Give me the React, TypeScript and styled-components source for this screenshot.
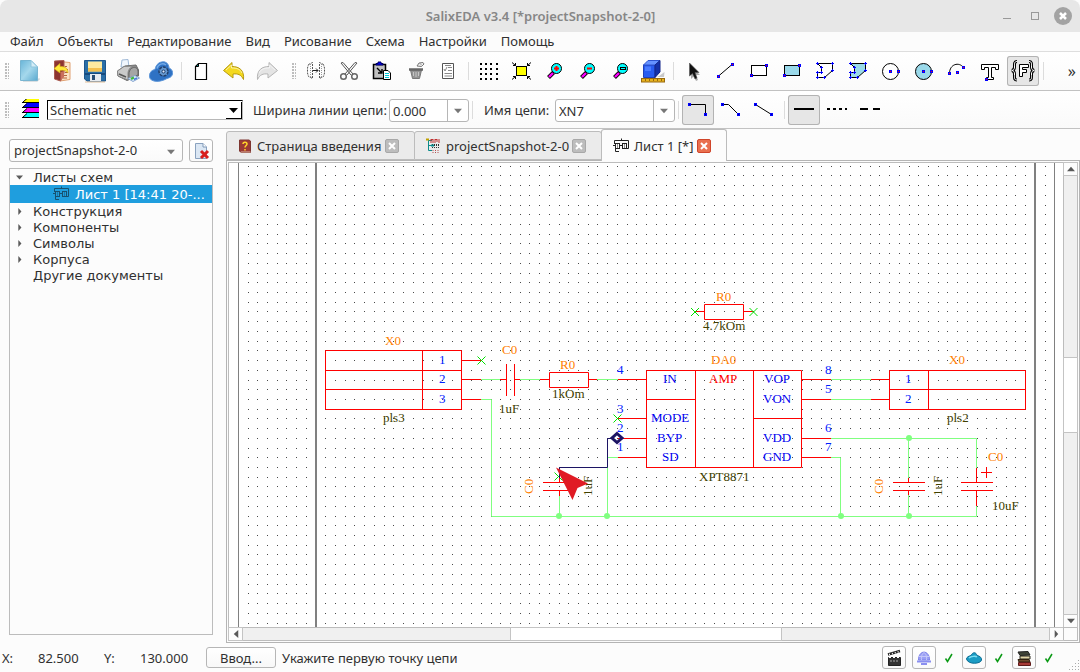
import React from "react";
import styled, { createGlobalStyle } from "styled-components";

const Global = createGlobalStyle`
  * { box-sizing: border-box; }
  body { margin: 0; background: #fcfcfc; }
  body, button, input, select {
    font-family: "Noto Sans", sans-serif;
    font-size: 13px;
    color: #303030;
  }
  button, input, select { padding: 0; border: 0; background: none; outline: none; }
  svg { display: block; flex: none; }
`;

/* ---------- frame ---------- */

const Window = styled.div`
  display: flex;
  flex-direction: column;
  height: 100vh;
  overflow: hidden;
`;

const TitleBar = styled.header`
  display: flex;
  align-items: center;
  justify-content: flex-end;
  height: 32px;
  padding-right: 3px;
  background: #e7e7e7;
  border-radius: 8px 8px 0 0;
  flex: none;
`;

const Title = styled.h1`
  flex: 1;
  margin: 0;
  padding-left: 88px;
  text-align: center;
  font-size: 13px;
  font-weight: 600;
  color: #868686;
`;

const WindowButton = styled.button`
  width: 28px;
  height: 24px;
  display: grid;
  place-items: center;
`;

const MenuBar = styled.nav`
  display: flex;
  align-items: center;
  height: 20px;
  padding-left: 3px;
  border-bottom: 1px solid #dedede;
  flex: none;
`;

const MenuItem = styled.button`
  padding: 0 7px;
  line-height: 19px;
  white-space: nowrap;
`;

const Bar = styled.div<{ $h: number }>`
  display: flex;
  height: ${(p) => p.$h}px;
  padding: 4px 0 0 5px;
  border-bottom: 1px solid #c2c2c2;
  background: linear-gradient(#fff, #fafafa);
  overflow: hidden;
  flex: none;
`;

const Grip = styled.div<{ $left?: number }>`
  width: 4px;
  height: 16px;
  margin: 7px 4px 0 ${(p) => p.$left ?? 0}px;
  background: radial-gradient(circle at 1px 1px, #bdbdbd 1px, transparent 1px) 0 0 / 3px 3px;
  flex: none;
`;

const Separator = styled.div`
  width: 1px;
  height: 18px;
  margin: 6px 3px 0;
  background: #dcdcdc;
  flex: none;
`;

const ToolButton = styled.button<{ $on?: boolean }>`
  width: 32px;
  height: 30px;
  margin-right: 1px;
  display: grid;
  place-items: center;
  border-radius: 3px;
  background: ${(p) => (p.$on ? "#e6e6e6" : "transparent")};
  box-shadow: ${(p) => (p.$on ? "inset 0 0 0 1px #b3b3b3" : "none")};
  flex: none;
`;

const Overflow = styled.button`
  margin: 0 4px 4px auto;
  font-size: 16px;
  line-height: 26px;
`;

const FieldLabel = styled.label<{ $w: number; $pad?: number }>`
  width: ${(p) => p.$w}px;
  padding-left: ${(p) => p.$pad ?? 0}px;
  line-height: 30px;
  white-space: nowrap;
  flex: none;
`;

const LayerMark = styled.div`
  padding: 4px 0 0 9px;
  flex: none;
`;

const LayerCombo = styled.div`
  position: relative;
  width: 196px;
  height: 20px;
  margin: 5px 10px 0 7px;
  border: 1px solid #b8b8b8;
  border-top-color: #000;
  border-left-color: #000;
  background: #fff;
  flex: none;
  select {
    width: 100%;
    height: 18px;
    padding-left: 2px;
    appearance: none;
  }
`;

const LayerArrow = styled.span`
  position: absolute;
  right: 0;
  top: 1px;
  width: 16px;
  height: 17px;
  display: grid;
  place-items: center;
  border-right: 1px solid #000;
  border-bottom: 1px solid #000;
  background: #fff;
  pointer-events: none;
`;

const ComboBox = styled.div<{ $w: number }>`
  display: flex;
  width: ${(p) => p.$w}px;
  height: 23px;
  margin-top: 4px;
  border: 1px solid #b6b6b6;
  border-radius: 3px;
  background: #fff;
  flex: none;
  input { flex: 1; min-width: 0; padding-left: 3px; }
  button { width: 21px; display: grid; place-items: center; border-left: 1px solid #b6b6b6; }
`;

/* ---------- work area ---------- */

const Work = styled.div`
  display: flex;
  flex: 1;
  min-height: 0;
`;

const Side = styled.aside`
  display: flex;
  flex-direction: column;
  width: 204px;
  margin: 10px 13px 8px 9px;
  flex: none;
`;

const ProjectRow = styled.div`
  display: flex;
  gap: 6px;
  margin-bottom: 6px;
`;

const ProjectSelect = styled.div`
  position: relative;
  flex: 1;
  height: 23px;
  border: 1px solid #b6b6b6;
  border-radius: 3px;
  background: linear-gradient(#fff, #fafafa);
  select { display: block; width: 100%; height: 20px; padding-left: 4px; appearance: none; }
  svg { position: absolute; right: 7px; top: 8px; pointer-events: none; }
`;

const SmallButton = styled.button<{ $gap?: number }>`
  width: 24px;
  height: 23px;
  margin-right: ${(p) => p.$gap ?? 0}px;
  display: grid;
  place-items: center;
  border: 1px solid #b6b6b6;
  border-radius: 3px;
  background: linear-gradient(#fff, #fafafa);
  flex: none;
`;

const Tree = styled.ul`
  flex: 1;
  margin: 0;
  padding: 0;
  border: 1px solid #bcbcbc;
  list-style: none;
  font-family: "DejaVu Sans", sans-serif;
  line-height: 15px;
`;

const TreeRow = styled.li<{ $selected?: boolean }>`
  display: flex;
  align-items: center;
  gap: ${(p) => (p.$selected ? 6 : 9)}px;
  height: ${(p) => (p.$selected ? 18 : 16)}px;
  padding-left: ${(p) => (p.$selected ? 43 : 5)}px;
  background: ${(p) => (p.$selected ? "#1f9ede" : "transparent")};
  color: ${(p) => (p.$selected ? "#fff" : "#303030")};
  white-space: nowrap;
`;

const Toggle = styled.span`
  width: 9px;
  display: grid;
  place-items: center;
`;

const Docs = styled.main`
  display: flex;
  flex-direction: column;
  flex: 1;
  min-width: 0;
`;

const Tabs = styled.div`
  display: flex;
  align-items: flex-end;
  height: 31px;
  flex: none;
`;

const Tab = styled.div<{ $active?: boolean; $w: number }>`
  display: flex;
  align-items: center;
  width: ${(p) => p.$w}px;
  height: ${(p) => (p.$active ? 32 : 29)}px;
  padding: 0 15px 0 11px;
  margin-bottom: ${(p) => (p.$active ? -1 : 0)}px;
  margin-right: ${(p) => (p.$active ? 0 : -1)}px;
  border: 1px solid #bcbcbc;
  border-bottom: ${(p) => (p.$active ? "0" : "1px solid #bcbcbc")};
  border-radius: 3px 3px 0 0;
  background: ${(p) => (p.$active ? "#fcfcfc" : "#ebebeb")};
  position: relative;
  z-index: ${(p) => (p.$active ? 1 : 0)};
  flex: none;
`;

const TabName = styled.button`
  flex: 1;
  margin-left: 5px;
  text-align: left;
  white-space: nowrap;
`;

const TabClose = styled.button<{ $hot?: boolean }>`
  width: 14px;
  height: 14px;
  display: grid;
  place-items: center;
  border: 1px solid ${(p) => (p.$hot ? "#d0452a" : "#a8a8a8")};
  border-radius: 2px;
  background: ${(p) => (p.$hot ? "#e9704f" : "#bdbdbd")};
  flex: none;
`;

const Pane = styled.div`
  display: flex;
  flex: 1;
  min-height: 0;
  padding: 1px;
  border: 1px solid #b4b4b4;
`;

const Viewport = styled.div`
  display: grid;
  grid-template: 1fr 13px / 1fr 14px;
  flex: 1;
  min-width: 0;
  border: 1px solid #bcbcbc;
`;

const Sheet = styled.div`
  min-width: 0;
  min-height: 0;
  overflow: hidden;
  background: #fff;
`;

const ScrollBar = styled.div<{ $vertical?: boolean }>`
  display: flex;
  flex-direction: ${(p) => (p.$vertical ? "column" : "row")};
  background: #f0f0f0;
  border-${(p) => (p.$vertical ? "left" : "top")}: 1px solid #bcbcbc;
`;

const ScrollArrow = styled.button`
  width: 13px;
  height: 12px;
  display: grid;
  place-items: center;
  background: #fdfdfd;
  box-shadow: 0 0 0 1px #c4c4c4;
  flex: none;
`;

const Track = styled.div<{ $grow: number; $thumb?: boolean }>`
  flex: ${(p) => p.$grow};
  background: ${(p) => (p.$thumb ? "#fff" : "transparent")};
  box-shadow: ${(p) => (p.$thumb ? "0 0 0 1px #c4c4c4" : "none")};
`;

const ScrollCorner = styled.div`
  border: solid #bcbcbc;
  border-width: 1px 0 0 1px;
`;

/* ---------- status bar ---------- */

const StatusBar = styled.footer`
  display: flex;
  align-items: center;
  height: 29px;
  padding-left: 2px;
  flex: none;
`;

const Coord = styled.span<{ $w: number }>`
  width: ${(p) => p.$w}px;
  flex: none;
`;

const EntryButton = styled.button`
  width: 70px;
  height: 21px;
  margin-right: 6px;
  border: 1px solid #b6b6b6;
  border-radius: 3px;
  background: linear-gradient(#fff, #f8f8f8);
`;

const StatusTools = styled.div`
  display: flex;
  align-items: center;
  margin-left: auto;
`;

const Check = styled.span`
  width: 26px;
  display: grid;
  place-items: center;
`;

const SizeGrip = styled.div`
  align-self: flex-end;
  width: 18px;
  padding: 0 0 1px 6px;
`;

/* ---------- icons ---------- */

const Icon = ({ children, size = 24 }: { children: React.ReactNode; size?: number }) => (
  <svg width={size} height={size} viewBox={`0 0 ${size} ${size}`} fill="none" stroke="#000" strokeWidth="1" aria-hidden="true">
    {children}
  </svg>
);

const Arrow = ({ dir = "down", w = 9, color = "#5a5a5a" }: { dir?: string; w?: number; color?: string }) => {
  const paths: Record<string, string> = {
    down: "M0 2H9L4.5 7Z",
    up: "M0 7H9L4.5 2Z",
    left: "M7 0V9L2 4.5Z",
    right: "M3 0V9L7 4.5Z",
  };
  return (
    <svg width={w} height={w} viewBox="0 0 9 9" aria-hidden="true">
      <path d={paths[dir]} fill={color} />
    </svg>
  );
};

const Pt = ({ x, y, red = true }: { x: number; y: number; red?: boolean }) => (
  <g stroke="none">
    <rect x={x - 1.5} y={y - 1.5} width="3" height="3" fill="#00f" />
    <rect x={x - 0.5} y={y - 0.5} width="1" height="1" fill={red ? "#f00" : "#000090"} />
  </g>
);

const NewIcon = () => (
  <Icon>
    <defs>
      <linearGradient id="sheetBlue" x1="0" y1="0" x2="1" y2="1">
        <stop offset="0" stopColor="#69b5d8" />
        <stop offset="0.5" stopColor="#a5d8ec" />
        <stop offset="1" stopColor="#5aa9cf" />
      </linearGradient>
    </defs>
    <path d="M6 22H20L22.500 19.500" stroke="#d0d6da" strokeWidth="1.500" />
    <path d="M3.500 1.500H14L20.500 8V21.500H3.500Z" fill="url(#sheetBlue)" stroke="#78b5d1" />
    <path d="M14 1.500V8H20.500Z" fill="#d4edf7" stroke="#8fc5dd" />
  </Icon>
);

const OpenIcon = () => (
  <Icon>
    <path d="M9 2.500L20 3.500V20.500L10 22Z" fill="#fbe3c3" stroke="#e0a070" />
    <path d="M15 7.500H17M14 10.500H18M15 13.500H18M13 16.500H17M13 19H17" stroke="#b5643c" />
    <path d="M4.500 2L14 1.500V14L10.500 22L4.500 20Z" fill="#8c3430" stroke="#a85a50" />
    <path d="M10.500 13V22L14 18V12Z" fill="#c9705c" stroke="none" />
    <path d="M4 9.500L10 4.500V7.500C15 7.500 18 9 18 14C16 11.500 14 11 10 11.500V14Z" fill="#ffe93a" stroke="#d4ab18" strokeWidth="0.7" />
  </Icon>
);

const SaveIcon = () => (
  <Icon>
    <path d="M1.500 1.500H22.500V22H4L1.500 20Z" fill="#2a6ea6" stroke="#1c568c" />
    <path d="M5 2.500H19V12.500H5Z" fill="#fdeaa0" stroke="none" />
    <path d="M5 9H19V12.500H5Z" fill="#f3c04f" stroke="none" />
    <path d="M2 14H22V16H2Z" fill="#174a7d" stroke="none" />
    <path d="M7 15H18V22H7Z" fill="#e6ebf0" stroke="none" />
    <path d="M9 16H12V21H9Z" fill="#274c72" stroke="none" />
    <path d="M2 23H22" stroke="#d9a874" strokeOpacity="0.7" />
  </Icon>
);

const PrintIcon = () => (
  <Icon>
    <path d="M5 8L6 1L12 0.500L13 8Z" fill="#f0f6fd" stroke="#9fb9d6" />
    <path d="M1.500 12L9 7L20 6L22.500 11V17L11 21.500L2 17Z" fill="#8b8b8b" stroke="#6a6a6a" />
    <path d="M1.500 12L8 7.500L17 7C13 9 12 12 12 15V21L2 17Z" fill="#cacaca" stroke="#858585" />
    <path d="M13 15C13 8 21 6 22 12V16L13 19Z" fill="#a5a5a5" stroke="#666" />
    <path d="M3 15L10 18" stroke="#555" strokeWidth="1.500" />
    <path d="M12 19.500L19 16.500L23.500 19L17 22.500Z" fill="#dceefb" stroke="#86a5ce" />
    <path d="M15 20L18 18.500" stroke="#42b83a" strokeWidth="2.500" />
    <path d="M18 20.500L21 19" stroke="#4d78dc" strokeWidth="1.500" />
  </Icon>
);

const CloudIcon = () => (
  <Icon>
    <path d="M0.500 17C0.500 13 3 11 6 10.500C7 5 11 2 16 3C19 4 20 7 20 9C23 10 24 13 23.500 15C23 18 20 19 18 19.500C14 22 8 23 5 22C2 21 0.500 20 0.500 17Z" fill="#2f72c4" stroke="#5d96d9" />
    <path d="M8 9.500C9 5 14 3.500 17 6" stroke="#71aae8" strokeWidth="1.500" />
    <circle cx="14.500" cy="12.500" r="4.500" stroke="#233f68" strokeWidth="1.500" strokeDasharray="3 1" fill="#6599d2" />
    <circle cx="14.500" cy="12.500" r="1.500" fill="#dbeaff" stroke="#203d68" />
  </Icon>
);

const PageIcon = () => (
  <Icon>
    <path d="M9.500 4.500H17.500V20.500H6.500V7.500Z" fill="#fff" strokeWidth="1.200" />
    <path d="M9.500 4.500V7.500H6.500Z" fill="#008080" />
  </Icon>
);

const BackArrow = ({ fill, edge, flip }: { fill: string; edge: string; flip?: boolean }) => (
  <Icon>
    <g transform={flip ? "translate(24 0) scale(-1 1)" : undefined}>
      <path d="M1.500 11.500L10 3.500V7.500C17 7.500 22.500 11 21.500 20.500C19 15.500 16 14.500 11 15V19Z" fill={fill} stroke={edge} />
      <path d="M4 11L9.500 6V9C15 9 18 10 20 14" stroke="#ffffff" strokeOpacity="0.6" />
    </g>
  </Icon>
);

const MirrorIcon = () => (
  <Icon>
    <path d="M4.500 5.500L8.500 3.500V19.500L4.500 17.500L3.500 14V9ZM19.500 5.500L15.500 3.500V19.500L19.500 17.500L20.500 14V9Z" stroke="#555" strokeDasharray="2 1" />
    <path d="M6.500 5V18M17.500 5V18" stroke="#999" strokeDasharray="1 1" />
    <path d="M9 11.500H14M12 9.500L14 11.500L12 13.500" stroke="#222" />
  </Icon>
);

const CutIcon = () => (
  <Icon>
    <path d="M4 4L6 3.500L16 15M20 4L18 3.500L8 15M4 4L14 16M20 4L10 16" stroke="#555" />
    <circle cx="6.500" cy="17.500" r="2.800" stroke="#666" strokeWidth="1.500" />
    <circle cx="17.500" cy="17.500" r="2.800" stroke="#666" strokeWidth="1.500" />
  </Icon>
);

const PasteIcon = () => (
  <Icon>
    <path d="M3.500 5.500H15.500V19.500H3.500Z" fill="#c0c0c0" strokeWidth="1.500" />
    <path d="M6 6V4.500H8V3H11V4.500H13V6Z" fill="#00f" stroke="#000060" />
    <path d="M7 9L12 14M12 10V14H8" strokeWidth="1.400" />
    <path d="M13.500 11.500H18L20.500 14V20.500H13.500Z" fill="#fff" />
    <path d="M15 14.500H19M15 16.500H19M15 18.500H19" stroke="#00c8d8" />
  </Icon>
);

const TrashIcon = () => (
  <Icon>
    <path d="M7.500 11L9.500 19.500H16.500L18.500 11Z" fill="#949494" stroke="#777" />
    <path d="M6 10.500H20" stroke="#666" strokeWidth="2.500" />
    <path d="M10.500 13V17M13 13V18M15.500 13V17" stroke="#c5c5c5" />
    <path d="M14 7L16 4L20 3.500L21 5L18.500 7.500Z" fill="#f2f2f2" stroke="#777" />
    <path d="M16.500 4L19 6.500" stroke="#999" />
  </Icon>
);

const ListIcon = () => (
  <Icon>
    <path d="M6.500 4.500H17.500V19.500H6.500Z" fill="#fff" stroke="#555" />
    <path d="M8 10L9 12L11 8M12 8.500H16M12 11.500H16M8.500 14.500H16M8.500 17H16M9 6.500H15" stroke="#8a8a8a" />
  </Icon>
);

const GridIcon = () => (
  <Icon>
    <g fill="#000" stroke="none">
      {[4, 9, 14, 19].map((y) => [4, 9, 14, 20].map((x) => <rect key={`${x}-${y}`} x={x} y={y} width="2" height="2" />))}
    </g>
  </Icon>
);

const FitIcon = () => (
  <Icon>
    <rect x="7.500" y="7.500" width="10" height="9" fill="#ff0" />
    <path d="M3 3.500L6.500 6.500M22 3.500L18.500 6.500M3 20.500L6.500 17.500M22 20.500L18.500 17.500M6.500 4V6.500H4M18.500 4V6.500H21M6.500 20V17.500H4M18.500 20V17.500H21" />
  </Icon>
);

const ZoomIcon = ({ kind }: { kind: string }) => (
  <Icon>
    <path d="M11.500 13.500L6.500 18.500" strokeWidth="4" />
    <path d="M11 14L7 18" stroke="#f0f" strokeWidth="2.400" />
    <circle cx="14.500" cy="9.500" r="5" fill="#0ff" />
    {kind === "in" && <path d="M12 9.500H17M14.500 7V12" stroke="#f00" strokeWidth="2" />}
    {kind === "out" && <path d="M12 9.500H17" stroke="#f00" strokeWidth="2" />}
    {kind === "win" && <rect x="12.500" y="8.500" width="5" height="2" />}
  </Icon>
);

const CubeIcon = () => (
  <Icon>
    <path d="M18 17L23.500 13L23 18H16Z" fill="#c9c9c9" stroke="none" />
    <path d="M2.500 6H14V18.500H2.500Z" fill="#285cf0" stroke="#2040b8" />
    <path d="M2.500 6L7 1.500H19L14 6Z" fill="#6592ff" stroke="#2e55d0" />
    <path d="M14 6L19 1.500V13L14 18.500Z" fill="#1431a8" stroke="#12258a" />
    <path d="M4 7.500H10V12H4Z" fill="#4a7bff" stroke="none" />
    <rect x="0.500" y="19.500" width="23" height="3.500" fill="#e7b31e" stroke="#98690e" />
    <path d="M4.500 20V22M8.500 20V22M12.500 20V22M16.500 20V22M20.500 20V22" stroke="#98690e" />
  </Icon>
);

const CursorIcon = () => (
  <Icon>
    <path d="M10 7V20L13 17L15 22L17 21L15 16H19Z" fill="#aaa" stroke="none" />
    <path d="M8.500 4V17L11.500 14.500L14 20L16 19L14 13.500H18Z" fill="#111" stroke="#555" strokeWidth="0.600" />
  </Icon>
);

const LineIcon = () => (
  <Icon>
    <path d="M4 17.500L18 5.500" />
    <Pt x={4.5} y={17.5} />
    <Pt x={18.5} y={5.5} />
  </Icon>
);

const RectIcon = ({ fill }: { fill?: string }) => (
  <Icon>
    <rect x="4.500" y="6.500" width="15" height="10" fill={fill ?? "#fff"} />
    <Pt x={4.5} y={16.5} />
    <Pt x={19.5} y={6.5} />
  </Icon>
);

const PolyIcon = ({ fill }: { fill?: string }) => {
  const pts = [[4.5, 4.5], [19.5, 4.5], [19.5, 11.5], [11.5, 18.5], [4.5, 18.5], [4.5, 13.5], [8.5, 13.5], [8.5, 8.5]];
  return (
    <Icon>
      <polygon points={pts.map((p) => p.join(",")).join(" ")} fill={fill ?? "#fff"} />
      <path d={pts.map(([x, y]) => `M${x - 1.5} ${y}h3M${x} ${y - 1.5}v3`).join("")} stroke="#00f" />
    </Icon>
  );
};

const CircleIcon = ({ fill }: { fill?: string }) => (
  <Icon>
    <circle cx="11.500" cy="12.500" r="8" fill={fill ?? "#fff"} />
    <Pt x={11.5} y={12.5} />
    <Pt x={19.5} y={12.5} />
  </Icon>
);

const ArcIcon = () => (
  <Icon>
    <path d="M4.500 14.500C4.500 5 14 2.500 18.500 8.500" />
    <Pt x={4.5} y={14.5} />
    <Pt x={18.5} y={8.5} />
    <Pt x={12.5} y={13.5} />
  </Icon>
);

const TextIcon = () => (
  <Icon>
    <path d="M3.500 5.500H20.500V10.500H17.500V8.500H13.500V18.500H15.500V20.500H8.500V18.500H10.500V8.500H6.500V10.500H3.500Z" fill="#fff" />
    <Pt x={8.5} y={20.5} />
  </Icon>
);

const brace =
  "M6 2.500C3 2.500 3.500 5 3.500 8C3.500 10 3 11 1 11.500C3 12 3.500 13 3.500 15C3.500 19 3 21 6 21M18 2.500C21 2.500 20.500 5 20.500 8C20.500 10 21 11 23 11.500C21 12 20.500 13 20.500 15C20.500 19 21 21 18 21";

const FieldIcon = () => (
  <Icon>
    <path d="M8.500 5.500H17.500V8.500H11.500V10.500H15.500V13.500H11.500V17.500H8.500Z" fill="#fff" />
    <path d={brace} strokeWidth="3" />
    <path d={brace} stroke="#fff" />
  </Icon>
);

const NetIcon = ({ d }: { d: string }) => (
  <Icon>
    <path d={d} />
    <Pt x={3.5} y={6.5} red={false} />
    <Pt x={19.5} y={16.5} red={false} />
  </Icon>
);

const DashIcon = ({ dash }: { dash?: string }) => (
  <Icon>
    <path d="M2 11H22" strokeWidth="2" strokeDasharray={dash} />
  </Icon>
);

const LayersIcon = () => (
  <svg width="18" height="19" viewBox="0 0 18 19" aria-hidden="true">
    {["#ff0", "#00f", "#f0f", "#0ff"].map((c, i) => (
      <g key={c} transform={`translate(0 ${i * 5 - 2})`}>
        <path d="M5 1H17V5H1Z" fill={c} />
        <path d="M0 5.500H17M1 5L5 1.500" stroke="#000" fill="none" />
      </g>
    ))}
  </svg>
);

const SchemeIcon = ({ color = "#222" }: { color?: string }) => (
  <Icon size={16}>
    <g stroke={color}>
      <path d="M1.500 6V2.500H15.500V10.500H13M8.500 0.500V3M2.500 10V13.500H6M0 7.500H3M7 7.500H9" />
      <rect x="2.500" y="5.500" width="4" height="5" />
      <rect x="9.500" y="5.500" width="4" height="5" />
      <path d="M4.500 6V10M11.500 6V10" strokeOpacity="0.5" />
    </g>
  </Icon>
);

const BookIcon = () => (
  <Icon size={14}>
    <path d="M1.500 1H11L12.500 2V13.500H3L1.500 12Z" fill="#9c3a34" stroke="#7d3530" />
    <path d="M3 13H12.500" stroke="#e0b9a4" />
    <path d="M5 5C5 2.500 9 2.500 9 5C9 6.500 7 6.500 7 8.500M7 10V11.500" stroke="#ffd52a" strokeWidth="1.500" />
  </Icon>
);

const ProjectIcon = () => (
  <Icon size={15}>
    <path d="M2.500 2V12.500H6M2.500 7.500H6M3 2.500H6" stroke="#0a8a8a" />
    <path d="M0 1.500H3" stroke="#c0a000" strokeWidth="2" />
    <path d="M5 1V5M7 1V5M5 1.500H7M9 1V5M9 1.500H11M11 1V4M13 1V5" stroke="#c03030" />
    <path d="M6.500 6V10M8.500 6V10M10.500 6V10M12.500 6V10" stroke="#333" strokeDasharray="2 1" />
    <path d="M7 12V15M9.500 12V15M12 12V15" stroke="#b05050" strokeDasharray="1 1" />
    <path d="M5 7.500H8" stroke="#0a8a8a" strokeWidth="2" />
  </Icon>
);

const CloseX = () => (
  <svg width="8" height="8" viewBox="0 0 8 8" aria-hidden="true">
    <path d="M1 1L7 7M7 1L1 7" stroke="#fff" strokeWidth="2" />
  </svg>
);

const RemoveDocIcon = () => (
  <Icon size={18}>
    <path d="M3.500 1.500H11L14.500 5V16.500H3.500Z" fill="#dbe7f4" stroke="#8aa2bf" />
    <path d="M11 1.500V5H14.500" fill="#fff" stroke="#7e99b8" />
    <path d="M9 9L16 16M16 9L9 16" stroke="#d81e1e" strokeWidth="3" />
  </Icon>
);

const ClapperIcon = () => (
  <Icon size={18}>
    <path d="M3.500 8.500H15.500V16.500H3.500Z" fill="#333" stroke="#222" />
    <path d="M3 5.500L15 2" stroke="#222" strokeWidth="2.500" />
    <path d="M4 5.500L14.500 2.500" stroke="#fff" strokeWidth="1.500" strokeDasharray="1 2" />
    <path d="M4 8.500H15" stroke="#fff" strokeDasharray="2 2" />
    <path d="M5 12H14" stroke="#aaa" strokeDasharray="2 1" />
  </Icon>
);

const GlobeIcon = () => (
  <Icon size={18}>
    <path d="M3.500 11C3.500 0.500 14.500 0.500 14.500 11Z" fill="#9ba0f5" stroke="#7b80ea" />
    <path d="M4 7.500H14M6.500 11C6 6 8 4 9 3.500C10 4 12 6 11.500 11" stroke="#c5c8fa" />
    <path d="M2 12.500H16M6 15H12" stroke="#8a8ff0" strokeWidth="2" />
  </Icon>
);

const BlobIcon = () => (
  <Icon size={18}>
    <path d="M1.500 10C1.500 8 4 7 6 6.500C8 2.500 11 3 12 6.500C15 7 17 9 16.500 11C16 15 3 16 1.500 10Z" fill="#1b9cc4" stroke="#0b6c93" />
    <path d="M4 9C6 7 11 7 12 8" stroke="#7fe0f4" strokeWidth="1.500" />
  </Icon>
);

const BooksIcon = () => (
  <Icon size={18}>
    <path d="M3 3L13 2.500L15 6L5 6.500Z" fill="#3f4437" stroke="#222" />
    <path d="M5 7H15V10H5Z" fill="#e3d6a8" stroke="#2b2b20" />
    <path d="M3 10.500H14L15 13H4Z" fill="#6b4a2c" stroke="#30200f" />
    <path d="M3.500 13.500H15.500V16.500H3.500Z" fill="#a63a35" stroke="#5d1a18" />
  </Icon>
);

const CheckMark = () => (
  <svg width="10" height="10" viewBox="0 0 10 10" aria-hidden="true">
    <path d="M1.500 5.500L3.500 8.500L8 1" stroke="#0b9a16" strokeWidth="1.500" fill="none" />
  </svg>
);

const GripDots = () => (
  <svg width="12" height="12" viewBox="0 0 12 12" aria-hidden="true">
    <path d="M10 1h1v1h-1zM10 4h1v1h-1zM10 7h1v1h-1zM10 10h1v1h-1zM7 4h1v1h-1zM7 7h1v1h-1zM7 10h1v1h-1zM4 7h1v1h-1zM4 10h1v1h-1zM1 10h1v1h-1z" fill="#aaa" />
  </svg>
);

/* ---------- schematic ---------- */

const GRID_STEP = 9.72;
const gridDots = (() => {
  let d = "";
  for (let i = -8; i <= 74; i++) {
    const x = Math.floor(325.8 + i * GRID_STEP);
    for (let j = -12; j <= 35; j++) d += `M${x} ${Math.floor(282.8 + j * GRID_STEP)}h1v1h-1z`;
  }
  return d;
})();

const cross = (x: number, y: number) => `M${x - 4} ${y - 4}l8 8M${x + 4} ${y - 4}l-8 8`;

const RED = "#f00";
const NET = "#80ff80";
const REF = "#ff8000";
const VALUE = "#404000";
const PIN = "#0000f0";
const NUM = "#0020ff";

type Label = [number, number, string, string];

const labels: Label[] = [
  [385, 345, "X0", REF], [502, 354, "C0", REF], [560, 369, "R0", REF], [716, 301, "R0", REF],
  [711, 364, "DA0", REF], [949, 364, "X0", REF], [988, 461, "C0", REF],
  [383, 422, "pls3", VALUE], [499, 413, "1uF", VALUE], [552, 398, "1kOm", VALUE], [703, 330, "4.7kOm", VALUE],
  [699, 481, "XPT8871", VALUE], [947, 422, "pls2", VALUE], [992, 510, "10uF", VALUE],
  [663, 383, "IN", PIN], [651, 422, "MODE", PIN], [657, 442, "BYP", PIN], [662, 461, "SD", PIN],
  [764, 383, "VOP", PIN], [763, 403, "VON", PIN], [763, 442, "VDD", PIN], [763, 461, "GND", PIN],
  [709, 383, "AMP", RED],
  [439, 364, "1", NUM], [439, 383, "2", NUM], [439, 403, "3", NUM],
  [617, 374, "4", NUM], [617, 413, "3", NUM], [617, 432, "2", NUM], [617, 451, "1", NUM],
  [825, 374, "8", NUM], [825, 393, "5", NUM], [825, 432, "6", NUM], [825, 451, "7", NUM],
  [905, 383, "1", NUM], [905, 403, "2", NUM],
];

const turned: Label[] = [
  [533, 494, "C0", REF], [592, 496, "1uF", VALUE], [883, 494, "C0", REF], [942, 496, "1uF", VALUE],
];

const Drawing = styled.svg`
  font-family: "Liberation Serif", serif;
  font-size: 13px;
`;

const Schematic = () => (
  <Drawing width="834" height="464" viewBox="229 163 834 464" fill="none" role="img" aria-label="Лист 1">
    <path d={gridDots} fill="#4a4a4a" shapeRendering="crispEdges" />
    <g stroke="#808080">
      <path d="M238.500 163V627M1054.500 163V627" />
      <path d="M316 163V627M1035 163V627" strokeWidth="2" />
    </g>
    <path
      stroke={NET}
      d="M481 379.500H500M520 379.500H540M597 379.500H618M481 399.500H491.500V516.500H976.500V506M607.500 516V457.500H618
         M559.500 516V496M831 379.500H871M831 399.500H871M831 438.500H976.500V468M831 457.500H840.500V516M908.500 438V478M908.500 495V516"
    />
    <g fill={NET}>
      {[[559, 516], [607, 516], [841, 516], [909, 516], [909, 438]].map(([x, y]) => (
        <circle key={`${x}-${y}`} cx={x} cy={y} r="3" />
      ))}
    </g>
    <g stroke={RED}>
      <path d="M325.500 350.500H461.500V409.500H325.500ZM422.500 350V409M325 370.500H461M325 389.500H461M461 360.500H481M461 379.500H481M461 399.500H481" />
      <path d="M500 379.500H506M506.500 364V396M514.500 364V396M515 379.500H520" />
      <path d="M540 379.500H549M549.500 372.500H588.500V387.500H549.500ZM589 379.500H597M704.500 304.500H743.500V319.500H704.500ZM695 311.500H704M744 311.500H753" />
      <path d="M646.500 370.500H801.500V467.500H646.500ZM695.500 370V467M753.500 370V467M646 399.500H695M753 418.500H801" />
      <path d="M618 379.500H646M618 418.500H646M618 438.500H646M618 457.500H646M802 379.500H831M802 399.500H831M802 438.500H831M802 457.500H831" />
      <path d="M871 379.500H889M871 399.500H889M889.500 370.500H1025.500V409.500H889.500ZM928.500 370V409M889 389.500H1025" />
      <path d="M543 482.500H575M543 490.500H575M559.500 491V496M559.500 476V482" />
      <path d="M893 482.500H925M893 490.500H925M908.500 478V482M908.500 491V495M961 482.500H993M961 490.500H993M976.500 468V482M976.500 491V506M981 472.500H992M986.500 467V478" />
    </g>
    <path stroke="#00e000" d={cross(481.5, 360.5) + cross(695, 312) + cross(753.5, 312) + cross(617.5, 418.5) + cross(558.5, 476.5)} />
    {labels.map(([x, y, text, fill]) => (
      <text key={`${x}-${y}`} x={x} y={y} fill={fill}>{text}</text>
    ))}
    {turned.map(([x, y, text, fill]) => (
      <text key={`${x}-${y}`} transform={`translate(${x} ${y}) rotate(-90)`} fill={fill}>{text}</text>
    ))}
    <path d="M612 438.500H607.500V467.500H559.500V478" stroke="#1c1464" />
    <path d="M617 433.500L622 438L617 442.500L612 438Z" stroke="#1c1464" strokeWidth="3" />
    <path d="M556 467.500L588 483.500L577.500 488L572.500 500Z" fill="#e01b24" />
  </Drawing>
);

/* ---------- data ---------- */

const menus = ["Файл", "Объекты", "Редактирование", "Вид", "Рисование", "Схема", "Настройки", "Помощь"];

type Tool = [string, React.ReactNode] | "|" | "grip";

const tools: Tool[] = [
  ["Новый", <NewIcon />], ["Открыть", <OpenIcon />], ["Сохранить", <SaveIcon />], ["Печать", <PrintIcon />], ["Облако", <CloudIcon />],
  "|",
  ["Лист", <PageIcon />],
  ["Отменить", <BackArrow fill="#f4d91e" edge="#b79a10" />],
  ["Повторить", <BackArrow fill="#e4e4e4" edge="#b5b5b5" flip />],
  "grip",
  ["Отразить", <MirrorIcon />], ["Вырезать", <CutIcon />], ["Вставить", <PasteIcon />], ["Удалить", <TrashIcon />], ["Свойства", <ListIcon />],
  "|",
  ["Сетка", <GridIcon />], ["Вписать", <FitIcon />], ["Увеличить", <ZoomIcon kind="in" />], ["Уменьшить", <ZoomIcon kind="out" />],
  ["Окно", <ZoomIcon kind="win" />], ["3D", <CubeIcon />],
  "|",
  ["Выбор", <CursorIcon />], ["Линия", <LineIcon />], ["Прямоугольник", <RectIcon />], ["Залитый прямоугольник", <RectIcon fill="#9ad9ea" />],
  ["Полигон", <PolyIcon />], ["Залитый полигон", <PolyIcon fill="#9ad9ea" />], ["Окружность", <CircleIcon />],
  ["Круг", <CircleIcon fill="#9ad9ea" />], ["Дуга", <ArcIcon />], ["Текст", <TextIcon />], ["Поле", <FieldIcon />],
  "|",
];

const folders = ["Конструкция", "Компоненты", "Символы", "Корпуса"];

export default function App() {
  return (
    <Window>
      <Global />
      <TitleBar>
        <Title>SalixEDA v3.4 [*projectSnapshot-2-0]</Title>
        <WindowButton aria-label="Свернуть">
          <Icon size={16}><path d="M4 10.500H12" stroke="#999" /></Icon>
        </WindowButton>
        <WindowButton aria-label="Развернуть">
          <Icon size={16}><rect x="4.500" y="4.500" width="7" height="7" stroke="#999" /></Icon>
        </WindowButton>
        <WindowButton aria-label="Закрыть">
          <Icon size={18}>
            <circle cx="9" cy="9" r="9" fill="#a3a3a3" stroke="none" />
            <path d="M6 6L12 12M12 6L6 12" stroke="#fff" strokeWidth="2.500" />
          </Icon>
        </WindowButton>
      </TitleBar>

      <MenuBar>
        {menus.map((m) => <MenuItem key={m}>{m}</MenuItem>)}
      </MenuBar>

      <Bar $h={39}>
        <Grip />
        {tools.map((t, i) => {
          if (t === "|") return <Separator key={i} />;
          if (t === "grip") return <Grip key={i} $left={8} />;
          return <ToolButton key={i} aria-label={t[0]} $on={t[0] === "Поле"}>{t[1]}</ToolButton>;
        })}
        <Overflow aria-label="Ещё">»</Overflow>
      </Bar>

      <Bar $h={38}>
        <Grip />
        <LayerMark><LayersIcon /></LayerMark>
        <LayerCombo>
          <select aria-label="Слой"><option>Schematic net</option></select>
          <LayerArrow><Arrow color="#000" /></LayerArrow>
        </LayerCombo>
        <FieldLabel htmlFor="width" $w={136}>Ширина линии цепи:</FieldLabel>
        <ComboBox $w={80}>
          <input id="width" defaultValue="0.000" />
          <button aria-label="Список ширин"><Arrow color="#777" w={8} /></button>
        </ComboBox>
        <Separator />
        <FieldLabel htmlFor="net" $w={79} $pad={8}>Имя цепи:</FieldLabel>
        <ComboBox $w={120}>
          <input id="net" defaultValue="XN7" />
          <button aria-label="Список цепей"><Arrow color="#777" w={8} /></button>
        </ComboBox>
        <Separator />
        <ToolButton $on aria-label="Ортогонально"><NetIcon d="M3.500 6.500H19.500V16.500" /></ToolButton>
        <ToolButton aria-label="Под углом"><NetIcon d="M3.500 6.500H9.500L19.500 16.500" /></ToolButton>
        <ToolButton aria-label="Прямо"><NetIcon d="M3.500 6.500L19.500 16.500" /></ToolButton>
        <Separator />
        <ToolButton $on aria-label="Сплошная"><DashIcon /></ToolButton>
        <ToolButton aria-label="Пунктир"><DashIcon dash="3 3" /></ToolButton>
        <ToolButton aria-label="Штрих"><DashIcon dash="8 5" /></ToolButton>
      </Bar>

      <Work>
        <Side>
          <ProjectRow>
            <ProjectSelect>
              <select aria-label="Проект"><option>projectSnapshot-2-0</option></select>
              <Arrow color="#777" w={8} />
            </ProjectSelect>
            <SmallButton aria-label="Закрыть проект"><RemoveDocIcon /></SmallButton>
          </ProjectRow>
          <Tree role="tree">
            <TreeRow role="treeitem"><Toggle><Arrow w={7} /></Toggle>Листы схем</TreeRow>
            <TreeRow role="treeitem" $selected><SchemeIcon color="#17506f" /><span>Лист 1 [14:41 20-...</span></TreeRow>
            {folders.map((f) => (
              <TreeRow role="treeitem" key={f}><Toggle><Arrow dir="right" w={7} /></Toggle>{f}</TreeRow>
            ))}
            <TreeRow role="treeitem"><Toggle />Другие документы</TreeRow>
          </Tree>
        </Side>

        <Docs>
          <Tabs>
            <Tab $w={189}><BookIcon /><TabName>Страница введения</TabName><TabClose aria-label="Закрыть"><CloseX /></TabClose></Tab>
            <Tab $w={188}><ProjectIcon /><TabName>projectSnapshot-2-0</TabName><TabClose aria-label="Закрыть"><CloseX /></TabClose></Tab>
            <Tab $w={126} $active><SchemeIcon /><TabName>Лист 1 [*]</TabName><TabClose $hot aria-label="Закрыть"><CloseX /></TabClose></Tab>
          </Tabs>
          <Pane>
            <Viewport>
              <Sheet><Schematic /></Sheet>
              <ScrollBar $vertical>
                <ScrollArrow aria-label="Вверх"><Arrow dir="up" w={8} /></ScrollArrow>
                <Track $grow={182} />
                <Track $grow={73} $thumb />
                <Track $grow={182} />
                <ScrollArrow aria-label="Вниз"><Arrow w={8} /></ScrollArrow>
              </ScrollBar>
              <ScrollBar>
                <ScrollArrow aria-label="Влево"><Arrow dir="left" w={8} /></ScrollArrow>
                <Track $grow={269} />
                <Track $grow={269} $thumb />
                <Track $grow={269} />
                <ScrollArrow aria-label="Вправо"><Arrow dir="right" w={8} /></ScrollArrow>
              </ScrollBar>
              <ScrollCorner />
            </Viewport>
          </Pane>
        </Docs>
      </Work>

      <StatusBar>
        <Coord $w={36}>X:</Coord>
        <Coord $w={66}>82.500</Coord>
        <Coord $w={36}>Y:</Coord>
        <Coord $w={66}>130.000</Coord>
        <EntryButton>Ввод...</EntryButton>
        <span>Укажите первую точку цепи</span>
        <StatusTools>
          <SmallButton aria-label="Запись" $gap={6}><ClapperIcon /></SmallButton>
          <SmallButton aria-label="Сеть"><GlobeIcon /></SmallButton>
          <Check><CheckMark /></Check>
          <SmallButton aria-label="Облако"><BlobIcon /></SmallButton>
          <Check><CheckMark /></Check>
          <SmallButton aria-label="Библиотеки"><BooksIcon /></SmallButton>
          <Check><CheckMark /></Check>
        </StatusTools>
        <SizeGrip><GripDots /></SizeGrip>
      </StatusBar>
    </Window>
  );
}
